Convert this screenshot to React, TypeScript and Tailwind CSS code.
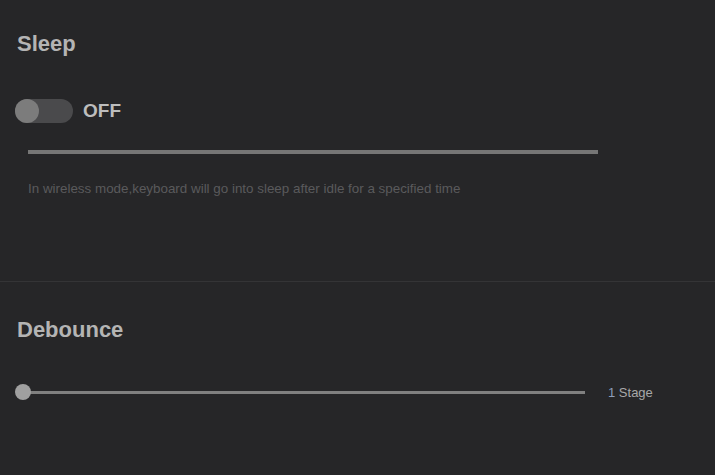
import React, { useState } from 'react';

const font = { fontFamily: '"Liberation Sans", Arial, sans-serif' };

const App: React.FC = () => {
  const [on, setOn] = useState(false);

  return (
    <div className="w-[715px] h-[475px] bg-[#262628] overflow-hidden" style={font}>
      <section className="h-[282px] border-b border-[#343436] pt-[31px] pl-[17px]">
        <h2 className="text-[22px] leading-[26px] font-bold text-[#b4b4b4]">Sleep</h2>

        <div className="flex items-center gap-[10px] mt-[42px] -ml-[2px]">
          <button
            onClick={() => setOn(!on)}
            className="w-[58px] h-[24px] rounded-full bg-[#4a4a4c] flex items-center"
          >
            <span className="w-[24px] h-[24px] rounded-full bg-[#7c7c7c]" />
          </button>
          <span className="text-[19px] leading-[22px] font-bold text-[#bdbdbd]">{on ? 'ON' : 'OFF'}</span>
        </div>

        <div className="ml-[11px] mt-[27px] w-[570px] h-[4px] bg-[#767676]" />

        <p className="ml-[11px] mt-[27px] text-[13.4px] leading-[16px] text-[#5a5a5c]">
          In wireless mode,keyboard will go into sleep after idle for a specified time
        </p>
      </section>

      <section className="pt-[35px] pl-[17px]">
        <h2 className="text-[22px] leading-[26px] font-bold text-[#b4b4b4]">Debounce</h2>

        <div className="flex items-center mt-[40px] -ml-[2px]">
          <div className="relative w-[570px] h-[16px] flex items-center">
            <div className="ml-[7px] w-[563px] h-[3px] bg-[#808080]" />
            <span className="absolute left-0 top-0 w-[16px] h-[16px] rounded-full bg-[#a0a0a0]" />
          </div>
          <span className="ml-[23px] mt-[2px] text-[13px] leading-[16px] text-[#a8a8a8]">
            <span className="text-[#8d9dbb]">1</span> Stage
          </span>
        </div>
      </section>
    </div>
  );
};

export default App;
